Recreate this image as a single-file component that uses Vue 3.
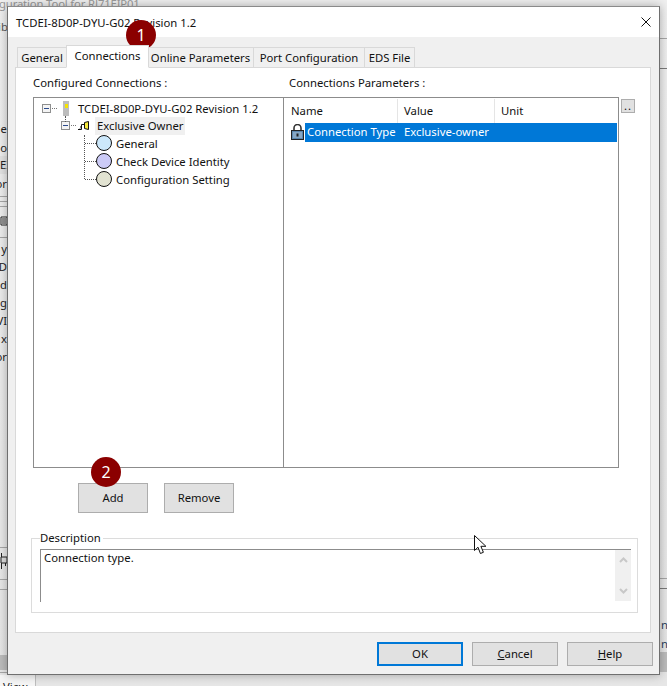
<script setup>
const tabs = ['General', 'Connections', 'Online Parameters', 'Port Configuration', 'EDS File']
const children = [
  { label: 'General', fill: '#cce8fb' },
  { label: 'Check Device Identity', fill: '#cccbf7' },
  { label: 'Configuration Setting', fill: '#e2e3d2' }
]
const leftBits = [
  { t: 'Ne', y: 120 }, { t: 'o', y: 139 }, { t: 'EIP', y: 156, shade: true }, { t: 'or', y: 175 },
  { t: 'y', y: 240 }, { t: 'D', y: 258 }, { t: 'd', y: 276 }, { t: 'g', y: 294 },
  { t: 'VI', y: 312 }, { t: 'x', y: 330 }, { t: 'or', y: 348 }
]
</script>

<template>
  <div class="desk">
    <div class="bits">
      <span class="bit top">guration Tool for RJ71EIP01</span>
      <span class="bit lib">ib</span>
      <span v-for="b in leftBits" :key="b.y" class="bit left" :class="{ shade: b.shade }" :style="{ top: b.y + 'px' }">{{ b.t }}</span>
      <i class="rule" style="top:196px;width:8px"></i>
      <i class="rule" style="top:201px;width:8px"></i>
      <i class="rule" style="top:206px;width:8px"></i>
      <i class="rule" style="top:237px;width:8px"></i>
      <i class="rule" style="top:547px;width:8px"></i>
      <i class="rule" style="top:579px;width:8px"></i>
      <i class="rule" style="top:589px;width:8px"></i>
      <i class="rule" style="top:672px;width:8px"></i>
      <i class="rule right" style="top:38px"></i>
      <i class="rule right dark" style="top:68px"></i>
      <i class="rule right" style="top:578px"></i>
      <i class="rule right dark" style="top:588px"></i>
      <i class="block" style="top:655px;height:15px;left:0;width:8px"></i>
      <i class="block" style="top:652px;height:20px;left:660px;width:7px"></i>
      <i class="viewtab"></i>
      <span class="bit rightbit" style="top:616px">na</span>
      <span class="bit rightbit" style="top:635px">na</span>
      <span class="bit view">View</span>
      <svg class="tiny a" width="8" height="10" viewBox="0 0 8 10"><path d="M1 1h6v8H1z" fill="#fff" stroke="#222"/><path d="M2 3h4M2 5h4M2 7h4" stroke="#222"/></svg>
      <svg class="tiny b" width="8" height="16" viewBox="0 0 8 16"><path d="M1.500 0v4M1 4h6v6H1z M1.500 10v6M5.500 10v3" fill="#ddd" stroke="#222"/></svg>
    </div>

    <section class="dialog">
      <header class="title">
        <span>TCDEI-8D0P-DYU-G02 Revision 1.2</span>
        <svg class="close" width="10" height="10" viewBox="0 0 10 10"><path d="M.5.500l9 9M9.500.500l-9 9" stroke="#111" fill="none"/></svg>
      </header>

      <div class="body">
        <nav class="tabs">
          <span v-for="t in tabs" :key="t" class="tab" :class="{ on: t === 'Connections' }">{{ t }}</span>
        </nav>

        <div class="page">
          <div class="heads">
            <span class="head-l">Configured Connections :</span>
            <span>Connections Parameters :</span>
          </div>

          <div class="panes">
            <div class="tree">
              <div class="row r0">
                <svg class="exp" width="15" height="9" viewBox="0 0 15 9"><rect x=".5" y=".5" width="8" height="8" fill="#f4f4f4" stroke="#8e8f8f"/><path d="M2 4.500h5" stroke="#2b4a8c"/><path d="M10 4.500h5" stroke="#777" stroke-dasharray="1 1"/></svg>
                <svg class="dev" width="6" height="15" viewBox="0 0 6 15"><rect width="6" height="15" fill="#bdbdbd"/><rect x="2" y="3" width="3" height="4" fill="#f5e400"/></svg>
                <span>TCDEI-8D0P-DYU-G02 Revision 1.2</span>
              </div>
              <div class="row r1">
                <svg class="exp" width="16" height="9" viewBox="0 0 16 9"><rect x=".5" y=".5" width="8" height="8" fill="#f4f4f4" stroke="#8e8f8f"/><path d="M2 4.500h5" stroke="#2b4a8c"/><path d="M10 4.500h6" stroke="#777" stroke-dasharray="1 1"/></svg>
                <svg class="conn" width="12" height="10" viewBox="0 0 12 10"><path d="M0 8.500h3.500v-5h3M2 6h2M2 8.500v-1" fill="none" stroke="#111"/><path d="M6.500 1.500l4-1v8l-4-1z" fill="#f7ea3c" stroke="#111"/></svg>
                <span class="sel">Exclusive Owner</span>
              </div>
              <div v-for="c in children" :key="c.label" class="row leaf">
                <i class="hdot"></i>
                <i class="dot" :style="{ background: c.fill }"></i>
                <span>{{ c.label }}</span>
              </div>
              <i class="vline v0"></i>
              <i class="vline v1"></i>
            </div>

            <div class="params">
              <div class="cols">
                <span class="cn">Name</span>
                <span class="cv">Value</span>
                <span class="cu">Unit</span>
              </div>
              <div class="prow">
                <svg class="lock" width="13" height="16" viewBox="0 0 13 16">
                  <path d="M3 7V4a3.500 3.500 0 0 1 7 0v3" fill="none" stroke="#333" stroke-width="1.600"/>
                  <rect x=".5" y="6.500" width="12" height="9" fill="#5b86ad" stroke="#222"/>
                  <rect x="2" y="8" width="9" height="6" fill="#87a7c4"/>
                  <rect x="5.500" y="9.500" width="2" height="3" fill="#222"/>
                </svg>
                <div class="psel"><span class="cn2">Connection Type</span><span>Exclusive-owner</span></div>
              </div>
            </div>

            <button class="dots" type="button">..</button>
          </div>

          <div class="actions">
            <button class="btn" type="button">Add</button>
            <button class="btn" type="button">Remove</button>
          </div>

          <fieldset class="desc">
            <legend>Description</legend>
            <div class="box">
              <span>Connection type.</span>
              <div class="sb">
                <svg width="9" height="6" viewBox="0 0 9 6"><path d="M1 5l3.500-3.500L8 5" fill="none" stroke="#c8c8c8" stroke-width="2"/></svg>
                <svg width="9" height="6" viewBox="0 0 9 6"><path d="M1 1l3.500 3.500L8 1" fill="none" stroke="#c8c8c8" stroke-width="2"/></svg>
              </div>
            </div>
          </fieldset>
        </div>

        <footer class="foot">
          <button class="fbtn ok" type="button">OK</button>
          <button class="fbtn" type="button"><u>C</u>ancel</button>
          <button class="fbtn" type="button"><u>H</u>elp</button>
        </footer>
      </div>
    </section>

    <b class="badge one">1</b>
    <b class="badge two">2</b>
    <svg class="cursor" width="13" height="20" viewBox="0 0 13 20"><path d="M.5.500v15l3.500-3.300 2.400 6.300 3-1.200-2.500-6h5z" fill="#fff" stroke="#111"/></svg>
  </div>
</template>

<style>
html, body { margin: 0; background: #e9e9e9; }
</style>

<style scoped>
.desk {
  position: relative;
  width: 667px;
  height: 686px;
  overflow: hidden;
  background: linear-gradient(#efefef, #e6e6e6);
  font-family: "Noto Sans", "Open Sans", sans-serif;
  font-size: 11.3px;
  color: #111;
}
.bits { position: absolute; inset: 0; }
.bit { position: absolute; line-height: 18px; white-space: nowrap; color: #222; }
.top { left: -1px; top: -5px; color: #999; letter-spacing: -.15px; }
.lib { left: -2px; top: 18px; color: #555; }
.left { left: 0; width: 7px; display: flex; justify-content: flex-end; overflow: hidden; }
.left.shade { justify-content: flex-start; background: #e2e2e2; }
.rule { position: absolute; left: 0; height: 1px; background: #a6a6a6; }
.rule.right { left: 660px; width: 7px; }
.rule.dark { background: #7a7a7a; }
.block { position: absolute; background: #bcbcbc; }
.viewtab { position: absolute; left: 0; top: 675px; width: 35px; height: 11px; background: #f5f5f5; border-right: 1px solid #bdbdbd; }
.rightbit { left: 661px; color: #2c3f5c; }
.view { left: 3px; top: 678px; color: #222; }
.tiny { position: absolute; }
.tiny.a { left: 0; top: 216px; }
.tiny.b { left: 0; top: 553px; }

.dialog {
  position: absolute;
  left: 7px;
  top: 6px;
  width: 653px;
  height: 669px;
  box-sizing: border-box;
  border: 1px solid #6f6f6f;
  border-top-color: #8a8a8a;
  display: flex;
  flex-direction: column;
  background: #f0f0f0;
  box-shadow: 0 0 9px rgba(0, 0, 0, .3);
}
.title {
  height: 30px;
  flex: none;
  background: #fff;
  display: flex;
  align-items: center;
  justify-content: space-between;
  padding: 0 8px;
}
.close { display: block; margin-bottom: 1px; }
.body { flex: 1; display: flex; flex-direction: column; padding: 0 6px 0 7px; min-height: 0; }
.tabs { display: flex; align-items: flex-end; height: 31px; padding-left: 2px; flex: none; position: relative; z-index: 1; margin-bottom: -1px; }
.tab {
  height: 21px;
  line-height: 19px;
  box-sizing: border-box;
  text-align: center;
  border: 1px solid #d9d9d9;
  border-left: none;
  background: #f0f0f0;
  white-space: nowrap;
  flex: none;
}
.tab:nth-child(1) { width: 50px; border-left: 1px solid #d9d9d9; }
.tab:nth-child(2) { width: 83px; }
.tab:nth-child(3) { width: 106px; }
.tab:nth-child(4) { width: 111px; }
.tab:nth-child(5) { width: 50px; }
.tab.on {
  height: 23px;
  line-height: 20px;
  background: #fff;
  border-bottom-color: #fff;
  border-left: 1px solid #d9d9d9;
  margin-left: -1px;
  margin-right: -1px;
  position: relative;
  z-index: 1;
}
.page {
  width: 636px;
  height: 566px;
  flex: none;
  box-sizing: border-box;
  background: #fff;
  border: 1px solid #d9d9d9;
  padding: 6px 0 0 17px;
  display: flex;
  flex-direction: column;
}
.heads { display: flex; height: 23px; line-height: 18px; flex: none; }
.head-l { width: 256px; }
.panes { display: flex; height: 371px; flex: none; }
.tree {
  width: 251px;
  flex: none;
  box-sizing: border-box;
  border: 1px solid #8c8c8c;
  padding-top: 1px;
  position: relative;
}
.row { display: flex; align-items: center; height: 18px; white-space: nowrap; }
.r0 { padding-left: 8px; }
.r0 .dev { margin: 0 9px 0 6px; }
.r1 { padding-left: 27px; height: 17px; }
.r1 .conn { margin: 0 5px 0 1px; }
.sel { background: #f0f0f0; padding: 0 2px; height: 18px; line-height: 18px; }
.leaf { padding-left: 51px; }
.hdot { width: 11px; border-top: 1px dotted #555; flex: none; }
.dot {
  width: 14px;
  height: 14px;
  border-radius: 50%;
  border: 1px solid #111;
  flex: none;
  margin-right: 4px;
  box-sizing: content-box;
}
.vline { position: absolute; width: 0; border-left: 1px dotted #555; }
.v0 { left: 31px; top: 18px; height: 6px; }
.v1 { left: 50px; top: 37px; height: 44px; }
.params {
  width: 336px;
  flex: none;
  margin-left: -1px;
  box-sizing: border-box;
  border: 1px solid #8c8c8c;
  padding: 1px 1px 1px 1px;
}
.cols { display: flex; height: 24px; align-items: center; line-height: 24px; }
.cols span { box-sizing: border-box; height: 24px; padding-left: 6px; border-right: 1px solid #e5e5e5; }
.cn { width: 113px; }
.cv { width: 97px; }
.cu { width: 122px; border-right: none !important; }
.prow { display: flex; align-items: center; height: 19px; padding-left: 6px; }
.lock { flex: none; margin: 0 1px 2px 0; }
.psel {
  flex: 1;
  height: 19px;
  line-height: 17px;
  background: #0078d7;
  color: #fff;
  display: flex;
  padding-left: 2px;
}
.cn2 { width: 97px; }
.dots {
  width: 14px;
  height: 14px;
  flex: none;
  margin: 2px 0 0 2px;
  padding: 0;
  border: 1px solid #adadad;
  background: #e1e1e1;
  font: inherit;
  line-height: 12px;
  letter-spacing: 1px;
  color: #111;
  overflow: hidden;
}
.actions { display: flex; gap: 16px; padding: 15px 0 0 45px; flex: none; }
.btn {
  width: 70px;
  height: 30px;
  padding: 0 0 1px;
  border: 1px solid #adadad;
  background: #e1e1e1;
  font: inherit;
  color: #111;
}
.desc {
  margin: 20px 0 0 -2px;
  width: 607px;
  height: 80px;
  box-sizing: border-box;
  border: 1px solid #dcdcdc;
  padding: 0 6px 10px 8px;
  position: relative;
}
.desc legend { padding: 0 2px 0 0; line-height: 10px; height: 10px; }
.box {
  position: relative;
  border-top: 1px solid #8c8c8c;
  border-left: 1px solid #8c8c8c;
  height: 52px;
  margin-top: 6px;
  padding: 0 0 0 3px;
  line-height: 16px;
  display: flex;
  justify-content: space-between;
}
.sb {
  width: 16px;
  height: 51px;
  background: #f0f0f0;
  display: flex;
  flex-direction: column;
  align-items: center;
  justify-content: space-between;
  padding: 7px 0;
  box-sizing: border-box;
}
.sb svg { display: block; }
.foot { display: flex; justify-content: flex-end; gap: 9px; padding-top: 9px; }
.fbtn {
  width: 86px;
  height: 24px;
  padding: 0 0 1px;
  border: 1px solid #adadad;
  background: #e1e1e1;
  font: inherit;
  color: #111;
  box-sizing: border-box;
}
.fbtn.ok { border: 2px solid #0078d7; }
.badge {
  position: absolute;
  width: 30px;
  height: 30px;
  border-radius: 50%;
  background: #8b0000;
  color: #fff;
  font-weight: 400;
  font-size: 16px;
  line-height: 30px;
  text-align: center;
}
.one { left: 126px; top: 20px; }
.two { left: 91px; top: 457px; }
.cursor { position: absolute; left: 474px; top: 535px; }
</style>
